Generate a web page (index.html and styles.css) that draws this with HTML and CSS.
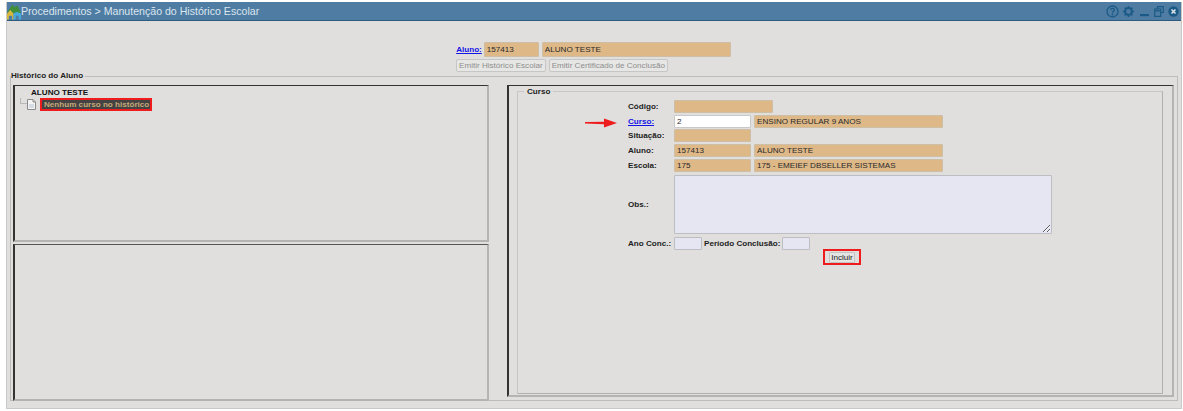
FILE: index.html
```html
<!DOCTYPE html>
<html lang="pt-BR">
<head>
<meta charset="utf-8">
<title>Manutenção do Histórico Escolar</title>
<link rel="stylesheet" href="styles.css">
</head>
<body>
<div class="window">
  <header class="titlebar">
    <div class="title-left">
      <svg class="logo" width="14" height="17" viewBox="0 0 15 17"><path d="M0 10 L3 5 L6 1 L8 4 L11 2 L15 10 Z" fill="#3f8f3a"/><path d="M0 17 V11 L3.500 7 L7 11 V17 H5.500 V13 H2 V17 Z" fill="#d9b93a"/><path d="M7 17 V11 Q10.500 7 15 11 V17 H12.500 V13 H9.500 V17 Z" fill="#46a9dc"/></svg>
      <span class="title">Procedimentos &gt; Manutenção do Histórico Escolar</span>
    </div>
    <div class="title-icons">
      <svg width="13" height="13" viewBox="0 0 13 13"><circle cx="6.500" cy="6.500" r="5.500" fill="none" stroke="#1b5a86" stroke-width="1.300"/><path d="M4.700 5 Q4.800 3.300 6.500 3.300 Q8.300 3.300 8.300 4.900 Q8.300 5.800 7.300 6.300 Q6.500 6.700 6.500 7.700" fill="none" stroke="#1b5a86" stroke-width="1.300"/><circle cx="6.500" cy="9.500" r=".9" fill="#1b5a86"/></svg>
      <svg width="11" height="11" viewBox="0 0 11 11"><circle cx="5.500" cy="5.500" r="3.400" fill="none" stroke="#1b5a86" stroke-width="2"/><path d="M5.500 0 V2 M5.500 9 V11 M0 5.500 H2 M9 5.500 H11 M1.600 1.600 L3 3 M8 8 L9.400 9.400 M1.600 9.400 L3 8 M8 3 L9.400 1.600" stroke="#1b5a86" stroke-width="1.500"/></svg>
      <svg class="icon-min" width="9" height="11" viewBox="0 0 9 11"><rect x="0" y="8" width="9" height="2.200" fill="#1b5a86"/></svg>
      <svg width="10" height="11" viewBox="0 0 10 11"><path d="M3.500 2.500 V.7 H9.300 V6.500 H7 M.7 3 H6.700 V10.300 H.7 Z M.7 4.800 H6.700" fill="none" stroke="#1b5a86" stroke-width="1.200"/></svg>
      <svg width="11" height="11" viewBox="0 0 11 11"><circle cx="5.500" cy="5.500" r="5.200" fill="#1b5a86"/><path d="M3.500 3.500 L7.500 7.500 M7.500 3.500 L3.500 7.500" stroke="#dfe6ec" stroke-width="1.500"/></svg>
    </div>
  </header>
  <main class="content">
    <form class="search">
      <div class="search-row">
        <a class="link" href="#">Aluno:</a>
        <input class="field locked w55" value="157413">
        <input class="field locked w189" value="ALUNO TESTE">
      </div>
      <div class="search-actions">
        <button type="button" class="btn-disabled" disabled>Emitir Histórico Escolar</button>
        <button type="button" class="btn-disabled" disabled>Emitir Certificado de Conclusão</button>
      </div>
    </form>
    <fieldset class="history">
      <legend>Histórico do Aluno</legend>
      <div class="columns">
        <div class="left-col">
          <section class="panel tree">
            <div class="tree-root">ALUNO TESTE</div>
            <div class="tree-item">
              <span class="branch"></span>
              <svg class="doc" width="9" height="11" viewBox="0 0 9 11"><path d="M.5 .5 H6 L8.500 3 V10.500 H.5 Z" fill="#f4f4f4" stroke="#8a8a8a"/><path d="M6 .5 V3 H8.500" fill="#d8d8d8" stroke="#8a8a8a"/><path d="M2 6 H7 M2 8 H7" stroke="#b6c4d4"/></svg>
              <span class="selected">Nenhum curso no histórico</span>
            </div>
          </section>
          <section class="panel lower"></section>
        </div>
        <section class="panel right">
          <fieldset class="course">
            <legend>Curso</legend>
            <div class="form-grid">
              <span class="label">Código:</span>
              <div class="row"><input class="field locked w99"></div>
              <a class="label link" href="#">Curso:</a>
              <div class="row"><input class="field white w77" value="2"><input class="field locked w189" value="ENSINO REGULAR 9 ANOS"></div>
              <span class="label">Situação:</span>
              <div class="row"><input class="field locked w77"></div>
              <span class="label">Aluno:</span>
              <div class="row"><input class="field locked w77" value="157413"><input class="field locked w189" value="ALUNO TESTE"></div>
              <span class="label">Escola:</span>
              <div class="row"><input class="field locked w77" value="175"><input class="field locked w189" value="175 - EMEIEF DBSELLER SISTEMAS"></div>
              <span class="label">Obs.:</span>
              <textarea class="obs"></textarea>
              <span class="label">Ano Conc.:</span>
              <div class="row tight">
                <input class="field pale w28">
                <span class="label">Período Conclusão:</span>
                <input class="field pale w28">
              </div>
            </div>
            <div class="submit"><button type="button" class="btn">Incluir</button></div>
            <svg class="arrow" width="32" height="10" viewBox="0 0 32 10"><path d="M0 4 L19 3.800 L19 .5 L32 5 L19 9.500 L19 6.200 L0 5.400 Z" fill="#ee1c1c"/></svg>
          </fieldset>
        </section>
      </div>
    </fieldset>
  </main>
</div>
</body>
</html>
```
FILE: styles.css
```css
* { box-sizing: border-box; }
html, body { margin: 0; height: 411px; overflow: hidden; background: #fff; }
body { font-family: "Liberation Sans", Arial, sans-serif; font-size: 8.100px; color: #1c1c1c; }
.window {
  margin: 2px 1px 0 6px;
  height: 407px;
  background: #e0dfdd;
  border: 1px solid #c9c9c9;
  border-top: 0;
  display: flex;
  flex-direction: column;
}
.titlebar {
  height: 19px;
  flex: none;
  background: #4f7ca3;
  border-bottom: 1px solid #2c5b80;
  display: flex;
  align-items: center;
  justify-content: space-between;
  padding: 0 2px 0 0;
}
.title-left { display: flex; align-items: center; }
.logo { display: block; }
.title { font-size: 10.600px; color: #dbe6ef; }
.title-icons { display: flex; align-items: center; gap: 4px; }
.icon-min { margin: 0 1px 0 2px; }
.content { flex: 1; display: flex; flex-direction: column; padding: 21px 4px 0 3px; }
.search { display: flex; flex-direction: column; align-items: center; gap: 2px; height: 29px; flex: none; }
.search-row { display: flex; align-items: center; gap: 3px; }
.search-row .link { margin-right: -1px; }
.search-actions { display: flex; gap: 3px; width: 275px; }
.link { color: #1414e6; font-weight: bold; text-decoration: underline; }
.field {
  height: 15px;
  padding: 0 2px;
  font: 8.100px "Liberation Sans", Arial, sans-serif;
  color: #2a2a2a;
  border: 1px solid #c8c4bc;
  border-radius: 1px;
  outline: 0;
  display: block;
}
.locked { background: #deb887; border-color: #cdbfa6; }
.white { background: #fff; border-color: #c8c8c8; }
.pale { background: #e6e6f2; border-color: #bdbdc4; }
.row .field { height: 13px; }
.w28 { width: 28px; }
.w55 { width: 55px; }
.w77 { width: 77px; }
.w99 { width: 99px; }
.w189 { width: 189px; }
.btn-disabled {
  height: 13px;
  padding: 0 2px;
  font: 8.100px "Liberation Sans", Arial, sans-serif;
  color: #8e8e8e;
  background: #e6e6e4;
  border: 1px solid #c6c6c6;
  border-radius: 2px;
  white-space: nowrap;
}
.history {
  margin: 0;
  padding: 4px 3px 0 2px;
  width: 1168px;
  height: 330px;
  min-width: 0;
  border: 1px solid #bcbcbc;
}
.history legend {
  padding: 0 2px 0 0;
  margin-left: -2px;
  font-weight: bold;
  line-height: 10px;
  color: #222;
}
.columns { display: grid; grid-template-columns: 476px 667px; column-gap: 18px; align-items: start; }
.left-col { display: flex; flex-direction: column; gap: 2px; }
.panel {
  border-style: solid;
  border-color: #333 #b4b4b4 #b4b4b4 #333;
  border-width: 1px 2px 2px 2px;
}
.tree { height: 157px; padding: 2px 0 0 5px; }
.lower { height: 157px; border-top-color: #555; }
.tree-root { font-weight: bold; color: #111; padding-left: 11px; line-height: 9px; }
.tree-item { display: flex; align-items: center; height: 14px; }
.branch { width: 7px; height: 6px; border: 1px solid #b8b8b8; border-top: 0; border-right: 0; margin-bottom: 6px; }
.doc { display: block; margin-right: 4px; }
.selected {
  display: block;
  border: 2px solid #ee1c1c;
  background: #434343;
  color: #c9a878;
  font-weight: bold;
  padding: 0 1px 0 2px;
  height: 13px;
  line-height: 9px;
  white-space: nowrap;
}
.right { height: 312px; padding: 0 9px 0 8px; }
.course {
  position: relative;
  margin: 1px 0 0;
  padding: 4px 0 0;
  height: 307px;
  min-width: 0;
  border: 1px solid #c6c6c6;
  border-right-color: #b0b0b0;
  border-bottom-color: #b0b0b0;
}
.course legend { font-weight: bold; margin-left: 6px; padding: 0 3px; line-height: 9px; color: #222; }
.form-grid {
  display: grid;
  grid-template-columns: 46px 1fr;
  row-gap: 1.700px;
  align-items: center;
  margin-left: 110px;
}
.label { font-weight: bold; color: #222; white-space: nowrap; }
.label.link { color: #1414e6; }
.row { display: flex; align-items: center; gap: 3px; }
.tight { gap: 2px; }
.obs {
  display: block;
  width: 378px;
  height: 59px;
  margin: 2px 0 1px;
  background: #e6e6f2;
  border: 1px solid #bdbdc4;
  border-radius: 1px;
  outline: 0;
  padding: 2px;
}
.submit { margin-left: 305px; margin-top: -1px; width: 38px; height: 16px; border: 2px solid #ee1c1c; display: flex; align-items: center; justify-content: center; }
.btn {
  height: 11px;
  width: 26px;
  padding: 0;
  font: 8.100px "Liberation Sans", Arial, sans-serif;
  color: #222;
  background: #e4e4e2;
  border: 1px solid #c4c4c4;
  border-radius: 1px;
}
.arrow { position: absolute; left: 67px; top: 22px; }
```
